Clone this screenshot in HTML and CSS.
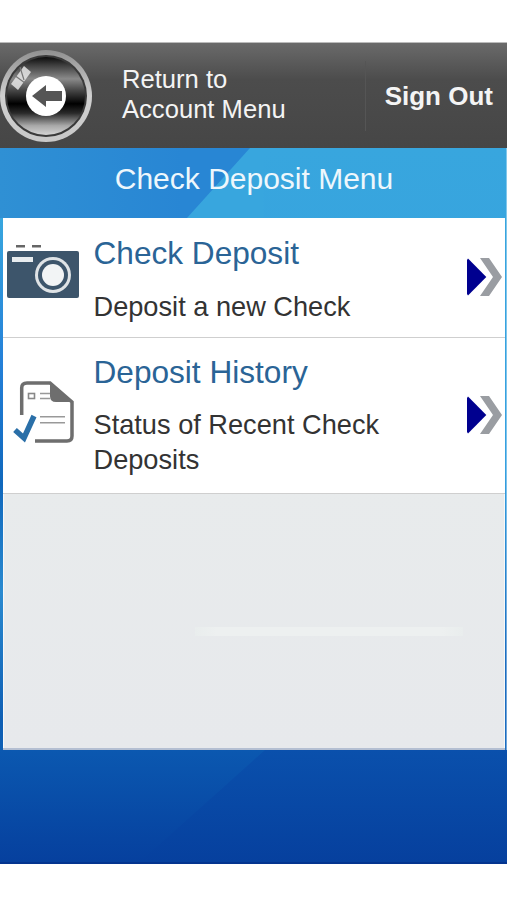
FILE: index.html
```html
<!DOCTYPE html>
<html lang="en">
<head>
    <meta charset="UTF-8">
    <meta name="viewport" content="width=device-width, initial-scale=1.0">
    <title>Check Deposit Menu</title>
    <link rel="stylesheet" href="styles.css">
</head>
<body>
    <header class="top-bar">
        <a class="back-link">
            <svg class="back-icon" width="92" height="92" viewBox="0 0 92 92">
                <defs>
                    <linearGradient id="ring" x1="0" y1="0" x2="0" y2="1">
                        <stop offset="0" stop-color="#909090"/>
                        <stop offset="0.5" stop-color="#d0d0d0"/>
                        <stop offset="1" stop-color="#c8c8c8"/>
                    </linearGradient>
                    <linearGradient id="glass" x1="0" y1="0" x2="0" y2="1">
                        <stop offset="0" stop-color="#0c0c0c"/>
                        <stop offset="0.1" stop-color="#3c3c3c"/>
                        <stop offset="0.28" stop-color="#8a8a8a"/>
                        <stop offset="0.42" stop-color="#4a4a4a"/>
                        <stop offset="0.6" stop-color="#000"/>
                        <stop offset="0.72" stop-color="#2a2a2a"/>
                        <stop offset="0.88" stop-color="#a8a8a8"/>
                        <stop offset="1" stop-color="#d4d4d4"/>
                    </linearGradient>
                </defs>
                <circle cx="46" cy="46" r="46" fill="url(#ring)"/>
                <circle cx="46" cy="46" r="41" fill="#3a3a3a"/>
                <circle cx="46" cy="46" r="39" fill="url(#glass)"/>
                <path d="M11 34 L24 16 L31 22 L18 40 Z" fill="#e6e6e6" opacity="0.85"/>
                <path d="M14 25 L25 33 M20 17 L24 30" stroke="#777" stroke-width="1.2"/>
                <circle cx="46" cy="46" r="20" fill="#fff"/>
                <path d="M32 46 L46 35 L46 41 L62 41 L62 51 L46 51 L46 57 Z" fill="#555"/>
            </svg>
            <span class="back-text">Return to<br>Account Menu</span>
        </a>
        <a class="sign-out">Sign Out</a>
    </header>

    <main class="content">
        <h1 class="page-title">Check Deposit Menu</h1>

        <div class="menu-panel">
            <a class="menu-row row-deposit">
                <svg class="row-icon" width="72" height="54" viewBox="0 0 72 54">
                    <rect x="9" y="0" width="9" height="2.5" fill="#666"/>
                    <rect x="25" y="0" width="9" height="2.5" fill="#666"/>
                    <rect x="0" y="6" width="72" height="47" rx="2" fill="#3d556b"/>
                    <rect x="5" y="12" width="21" height="5" fill="#e8ecef"/>
                    <circle cx="46" cy="30" r="18" fill="#dfe3e6"/>
                    <circle cx="46" cy="30" r="15" fill="#3d556b"/>
                    <circle cx="46" cy="30" r="11" fill="#f2f4f5"/>
                </svg>
                <div class="row-text">
                    <h2>Check Deposit</h2>
                    <p>Deposit a new Check</p>
                </div>
                <svg class="row-arrow" width="36" height="38" viewBox="0 0 36 38">
                    <path d="M13 0 H22 L35 19 L22 38 H13 L26 19 Z" fill="#9a9da2"/>
                    <path d="M1 0.5 L19.3 19 L1 37.5 L0 36 V2 Z" fill="#00008f"/>
                </svg>
            </a>

            <a class="menu-row row-history">
                <svg class="row-icon" width="62" height="64" viewBox="0 0 62 64">
                    <path d="M9.7 35 V8 Q9.7 3 15 3 H38 L60 22 V56 Q60 61 55 61 H23" fill="none" stroke="#6e6e6e" stroke-width="3.5"/>
                    <path d="M38 3 L60 22 H44 Q38 22 38 16 Z" fill="#6e6e6e"/>
                    <rect x="16.5" y="13.5" width="6" height="5" fill="none" stroke="#888" stroke-width="1.6"/>
                    <path d="M28 13.5 H38 M28 18.5 H38" stroke="#999" stroke-width="1.6"/>
                    <path d="M28 36.7 H53 M28 42.7 H53" stroke="#999" stroke-width="1.6"/>
                    <path d="M3 50 L12 58 L22 36" fill="none" stroke="#2a6fa8" stroke-width="5.5"/>
                </svg>
                <div class="row-text">
                    <h2>Deposit History</h2>
                    <p>Status of Recent Check Deposits</p>
                </div>
                <svg class="row-arrow" width="36" height="38" viewBox="0 0 36 38">
                    <path d="M13 0 H22 L35 19 L22 38 H13 L26 19 Z" fill="#9a9da2"/>
                    <path d="M1 0.5 L19.3 19 L1 37.5 L0 36 V2 Z" fill="#00008f"/>
                </svg>
            </a>
        </div>

        <div class="page-foot"></div>
    </main>
</body>
</html>
```

FILE: styles.css
```css
body {
    font-family: "Liberation Sans", Arial, sans-serif;
    margin: 0;
    padding-top: 42px;
    background-color: #fff;
    color: #333;
}
a {
    color: inherit;
    text-decoration: none;
}
.top-bar {
    height: 106px;
    display: flex;
    align-items: center;
    justify-content: space-between;
    background: linear-gradient(#6a6a6a, #4c4c4c 35%, #464646);
    border-top: 1px solid #bbb;
    box-sizing: border-box;
    color: #f4f4f4;
}
.back-link {
    display: flex;
    align-items: center;
    gap: 30px;
}
.back-icon {
    display: block;
    flex: none;
}
.back-text {
    font-size: 25.6px;
    line-height: 30px;
    padding-bottom: 3px;
}
.sign-out {
    height: 70px;
    line-height: 70px;
    padding: 0 14px 0 19px;
    border-left: 1px solid #555;
    font-size: 26px;
    font-weight: bold;
}
.content {
    height: 716px;
    display: flex;
    flex-direction: column;
    padding: 0 2px 0 3px;
    box-sizing: border-box;
    background:
        linear-gradient(#38a6de, #38a6de 70px, #2480d8 30%, #1068bc 47%, #2a8ad0 62%, #0f5fb4 80%) left / 52% 100% no-repeat,
        linear-gradient(#38a6de, #35a0e0 45%, #1a6cc0 72%) right / 52% 100% no-repeat;
    position: relative;
}
.content::before {
    content: "";
    position: absolute;
    top: 0;
    left: 0;
    right: 0;
    height: 70px;
    background: linear-gradient(90deg, #2f90d4, #2886d4 36%);
    clip-path: polygon(0 0, 250px 0, 187px 100%, 0 100%);
}
.page-title {
    position: relative;
    margin: 0;
    height: 70px;
    flex: none;
    line-height: 62px;
    text-align: center;
    font-size: 30px;
    font-weight: normal;
    color: #eef7fc;
}
.menu-panel {
    position: relative;
    height: 532px;
    flex: none;
    background:
        linear-gradient(90deg, #e9eded, #edf0f0 8%, #edf0f0 92%, #e9eded) 192px 409px / 268px 9px no-repeat,
        linear-gradient(#e9edec, #e7e9ec);
    box-shadow: inset 1px 0 #f7f8f8, inset -1px 0 #f7f8f8;
    border-bottom: 2px solid #b4bfd2;
    box-sizing: border-box;
}
.page-foot {
    flex: 1;
    margin: 0 -2px 0 -3px;
    position: relative;
    background: linear-gradient(#0a50ac, #06409e);
    border-bottom: 2px solid #04348f;
}
.page-foot::before {
    content: "";
    position: absolute;
    top: 0;
    left: 0;
    right: 0;
    bottom: 0;
    background: linear-gradient(#0b58b0, #06409e);
    clip-path: polygon(0 0, 265px 0, 140px 100%, 0 100%);
}
.menu-row {
    display: flex;
    align-items: flex-start;
    background-color: #fff;
    border-bottom: 1px solid #cfcfcf;
    box-sizing: border-box;
}
.row-deposit {
    height: 120px;
}
.row-history {
    height: 156px;
}
.row-icon {
    flex: none;
}
.row-deposit .row-icon {
    margin: 27px 14.5px 0 4px;
}
.row-history .row-icon {
    margin: 42px 19.5px 0 9px;
}
.row-text {
    flex: 1;
    min-width: 0;
}
.row-text h2 {
    margin: 17px 0 0;
    font-size: 31.6px;
    line-height: 36px;
    font-weight: normal;
    color: #2a6496;
}
.row-text p {
    margin: 18px 0 0;
    font-size: 27.2px;
    line-height: 36px;
    color: #333;
    width: 330px;
}
.row-history h2 {
    margin-top: 16px;
}
.row-history p {
    margin-top: 17px;
    line-height: 35px;
}
.row-arrow {
    flex: none;
    margin: 40px 2px 0 0;
}
.row-history .row-arrow {
    margin-top: 58px;
}
```
